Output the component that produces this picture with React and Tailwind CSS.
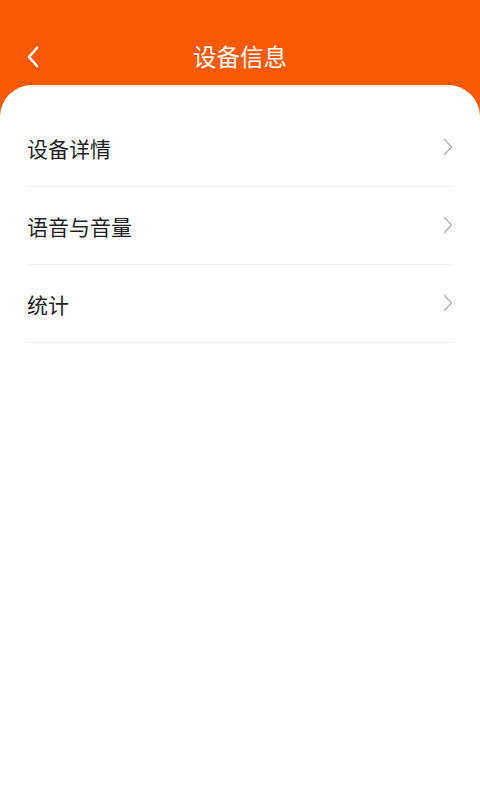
import React from "react";

const items = ["设备详情", "语音与音量", "统计"];

const Chevron = ({ className }) => (
  <svg className={className} viewBox="0 0 10 18" fill="none" stroke="currentColor" strokeWidth={1.4} strokeLinecap="round" strokeLinejoin="round">
    <path d="M1.5 1.5 L8.5 9 L1.5 16.5" />
  </svg>
);

const App = () => {
  return (
    <div
      className="w-[480px] h-[800px] bg-[#fa5a05] flex flex-col overflow-hidden"
      style={{ fontFamily: '"Noto Sans CJK SC", "Noto Sans", sans-serif' }}
    >
      {/* Header */}
      <header className="h-[85px] flex items-start pt-[37px] relative">
        <button className="ml-[26px] w-[20px] h-[40px] flex items-center text-white">
          <svg className="w-[14px] h-[22px]" viewBox="0 0 14 22" fill="none" stroke="currentColor" strokeWidth={2.6} strokeLinecap="round" strokeLinejoin="round">
            <path d="M11 2 L3 11 L11 20" />
          </svg>
        </button>
        <h1 className="absolute left-0 right-0 top-[38px] text-center text-white text-[23.5px] leading-[36px]">
          设备信息
        </h1>
      </header>

      {/* Card */}
      <main className="flex-1 bg-white rounded-t-[32px] pt-[24px] px-[27px]">
        {items.map((label) => (
          <div
            key={label}
            className="h-[78px] flex items-center justify-between border-b border-[#eeeeee]"
          >
            <span className="text-[21px] text-[#1f1f1f] pt-[2px]">{label}</span>
            <Chevron className="w-[10px] h-[18px] text-[#b5b5b5] mt-[-1px]" />
          </div>
        ))}
      </main>
    </div>
  );
};

export default App;
